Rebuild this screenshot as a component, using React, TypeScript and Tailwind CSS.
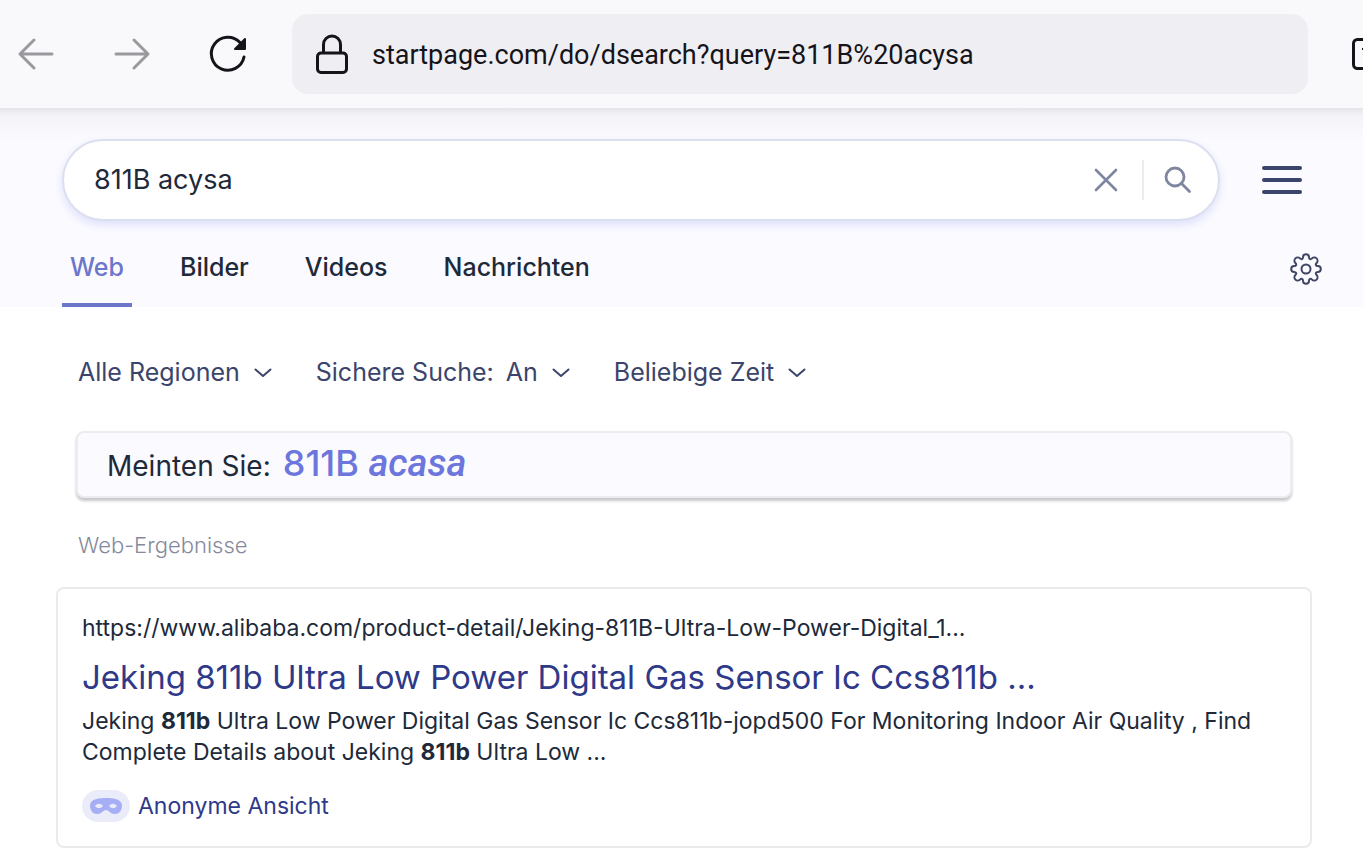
import React from 'react';

const tabs = [
  { label: 'Web', active: true },
  { label: 'Bilder', active: false },
  { label: 'Videos', active: false },
  { label: 'Nachrichten', active: false },
];

export default function App() {
  return (
    <div className="overflow-hidden bg-white font-['Inter','Liberation_Sans',sans-serif] text-[#202939]">
      <BrowserBar />

      {/* Search header */}
      <header className="bg-[#fafaff] bg-linear-to-b from-[#e4e4e9] via-[#f3f3f8] via-[8px] to-[#fafaff] to-[32px] pt-[31px]">
        <div className="flex items-center gap-[42px] pl-[62px] pr-[61px]">
          <form className="flex h-[82px] flex-1 items-center rounded-full border-2 border-[#dcdfee] bg-white pl-[30px] pr-[26px] shadow-[0_4px_8px_#dfe1fb]" onSubmit={(e) => e.preventDefault()}>
            <input aria-label="Suche" defaultValue="811B acysa" className="min-w-0 flex-1 bg-transparent text-[27px] outline-none" />
            <button type="button" aria-label="Löschen" className="pr-6">
              <svg width="24" height="24" viewBox="0 0 24 24" fill="none" stroke="#7f869f" strokeWidth="2.6" strokeLinecap="round">
                <path d="M2 2l20 20M22 2L2 22" />
              </svg>
            </button>
            <button aria-label="Suchen" className="flex h-10 items-center border-l-2 border-[#ebecf2] pl-5">
              <svg width="28" height="28" viewBox="0 0 28 28" fill="none" stroke="#7f869f" strokeWidth="2.8" strokeLinecap="round">
                <circle cx="11" cy="11" r="9" />
                <path d="M17.5 17.5l8 8" />
              </svg>
            </button>
          </form>
          <button aria-label="Menü" className="flex flex-col gap-2">
            <span className="h-1 w-10 rounded-full bg-[#3b446b]" />
            <span className="h-1 w-10 rounded-full bg-[#3b446b]" />
            <span className="h-1 w-10 rounded-full bg-[#3b446b]" />
          </button>
        </div>

        <div className="flex items-center justify-between pl-[62px] pr-[41px]">
          <nav className="flex gap-10">
            {tabs.map((tab) => (
              <a
                key={tab.label}
                href="#"
                className={`h-[86px] border-b-4 px-2 pt-7 text-[25px] leading-9 font-medium ${tab.active ? 'border-[#6c76ca] text-[#6c76ca]' : 'border-transparent'}`}
              >
                {tab.label}
              </a>
            ))}
          </nav>
          <button aria-label="Einstellungen" className="pt-2.5">
            <GearIcon />
          </button>
        </div>
      </header>

      <main className="pr-[51px] pb-[5px] pl-14">
        {/* Filters */}
        <div className="mt-12 flex h-9 items-center gap-11 pl-[22px] text-[25px] text-[#3b446b]">
          <Filter label="Regionen" options={['Alle Regionen', 'Deutschland']} />
          <div className="flex items-center gap-3">
            <label htmlFor="safe">Sichere Suche:</label>
            <Filter id="safe" options={['An', 'Aus']} />
          </div>
          <Filter label="Zeit" options={['Beliebige Zeit', 'Letzte Woche']} />
        </div>

        <p className="mx-5 mt-10 flex h-[67px] items-baseline gap-3 rounded-lg border-2 border-[#ebebf0] bg-[#fafaff] pt-1.5 pl-[29px] text-[28px] leading-[48px] shadow-[0_3px_3px_#c8c8cb]">
          <span>Meinten Sie:</span>
          <a href="#" className="text-[36px] font-medium text-[#6c76dc]">
            811B <em className="font-[Roboto,sans-serif] text-[38px]">acasa</em>
          </a>
        </p>

        <h2 className="mt-[31px] pl-[22px] text-[22px] leading-8 font-light text-[#85899b]">Web-Ergebnisse</h2>

        {/* Result */}
        <article className="mt-[26px] rounded-lg border-2 border-[#ebebee] px-6 pt-[23px] pb-6">
          <a href="#" className="block text-[23px] leading-8">
            https://www.alibaba.com/product-detail/Jeking-811B-Ultra-Low-Power-Digital_1...
          </a>
          <h3 className="mt-2 text-[33px] leading-[50px] text-[#2e3989]">
            <a href="#">Jeking 811b Ultra Low Power Digital Gas Sensor Ic Ccs811b ...</a>
          </h3>
          <p className="mt-1 text-[23px] leading-[31px]">
            Jeking <b>811b</b> Ultra Low Power Digital Gas Sensor Ic Ccs811b-jopd500 For Monitoring Indoor Air Quality , Find Complete Details about Jeking <b>811b</b> Ultra Low ...
          </p>
          <a href="#" className="mt-[22px] flex items-center gap-2 text-[23px] leading-8 text-[#2e3989]">
            <span className="flex h-8 w-12 items-center justify-center rounded-full bg-[#ebecfa]">
              <MaskIcon />
            </span>
            Anonyme Ansicht
          </a>
        </article>
      </main>
    </div>
  );
}

function BrowserBar() {
  return (
    <div className="flex h-[108px] items-center bg-[#f9f9fc] text-[#15141a]">
      <div className="flex shrink-0 items-center gap-14 pl-4">
        <button aria-label="Zurück" className="text-[#9a999e]">
          <ArrowIcon d="M36 20H4M18 6L4 20l14 14" />
        </button>
        <button aria-label="Vor" className="text-[#9a999e]">
          <ArrowIcon d="M4 20h32M22 6l14 14-14 14" />
        </button>
        <button aria-label="Neu laden">
          <svg width="40" height="40" viewBox="0 0 40 40" fill="none" stroke="currentColor" strokeWidth="3" strokeLinecap="round">
            <path d="M36 23A16.500 16.500 0 1 1 32 8.500" />
            <path d="M37 5v10H27z" fill="currentColor" strokeWidth="2" strokeLinejoin="round" />
          </svg>
        </button>
      </div>
      <label className="ml-11 flex h-20 min-w-0 flex-1 items-center gap-6 rounded-2xl bg-[#efeef3] pl-6">
        <svg width="32" height="40" viewBox="0 0 32 40" fill="none" stroke="currentColor" strokeWidth="3">
          <rect x="1.500" y="19" width="29" height="19.500" rx="3.500" />
          <path d="M7.500 19v-8.500a8.500 8.500 0 0 1 17 0V19" />
        </svg>
        <input
          aria-label="Adresse"
          defaultValue="startpage.com/do/dsearch?query=811B%20acysa"
          className="min-w-0 flex-1 bg-transparent pt-0.5 font-[Roboto,sans-serif] text-[27px] outline-none"
        />
      </label>
      <button aria-label="Tabs" className="ml-11 w-[11px] shrink-0 overflow-hidden">
        <svg width="36" height="32" viewBox="0 0 36 32" fill="none" stroke="currentColor" strokeWidth="3">
          <rect x="1.500" y="1.500" width="33" height="29" rx="4" />
          <path d="M10 11h8" strokeWidth="2" />
        </svg>
      </button>
    </div>
  );
}

function ArrowIcon({ d }: { d: string }) {
  return (
    <svg width="40" height="40" viewBox="0 0 40 40" fill="none" stroke="currentColor" strokeWidth="3" strokeLinecap="round" strokeLinejoin="round">
      <path d={d} />
    </svg>
  );
}

function Filter({ id, label, options }: { id?: string, label?: string, options: string[] }) {
  return (
    <div className="grid items-center">
      <select id={id} aria-label={label} className="field-sizing-content col-start-1 row-start-1 appearance-none bg-transparent pr-8 outline-none">
        {options.map((option) => (
          <option key={option}>{option}</option>
        ))}
      </select>
      <svg className="pointer-events-none col-start-1 row-start-1 justify-self-end" width="18" height="10" viewBox="0 0 18 10" fill="none" stroke="currentColor" strokeWidth="2" strokeLinecap="round" strokeLinejoin="round">
        <path d="M1.500 1.500L9 8l7.500-6.500" />
      </svg>
    </div>
  );
}

function GearIcon() {
  return (
    <svg width="32" height="32" viewBox="0 0 32 32" fill="none" stroke="#3f4663" strokeWidth="2" strokeLinejoin="round">
      <circle cx="16" cy="16" r="4.500" />
      <path d="M13 4.200a3 3 0 0 1 6 0c0 2 1.600 2.600 3 1.200a3 3 0 0 1 4.600 4.600c-1.400 1.400-.800 3 1.200 3a3 3 0 0 1 0 6c-2 0-2.600 1.600-1.200 3a3 3 0 0 1-4.600 4.600c-1.400-1.400-3-.800-3 1.200a3 3 0 0 1-6 0c0-2-1.600-2.600-3-1.200a3 3 0 0 1-4.600-4.600c1.400-1.400.800-3-1.200-3a3 3 0 0 1 0-6c2 0 2.600-1.600 1.200-3a3 3 0 0 1 4.600-4.600c1.400 1.400 3 .800 3-1.200z" />
    </svg>
  );
}

function MaskIcon() {
  return (
    <svg width="32" height="16" viewBox="0 0 32 16" fill="#a6aef5">
      <path fillRule="evenodd" d="M16 0c6 0 16 .500 16 7.500 0 5-3 8.500-7 8.500-5 0-6-4-9-4s-4 4-9 4c-4 0-7-3.500-7-8.500C0 .500 10 0 16 0zM5 8c2.500 3 5.500 3 8 0-2.500-3-5.500-3-8 0zm14 0c2.500 3 5.500 3 8 0-2.500-3-5.500-3-8 0z" />
    </svg>
  );
}
